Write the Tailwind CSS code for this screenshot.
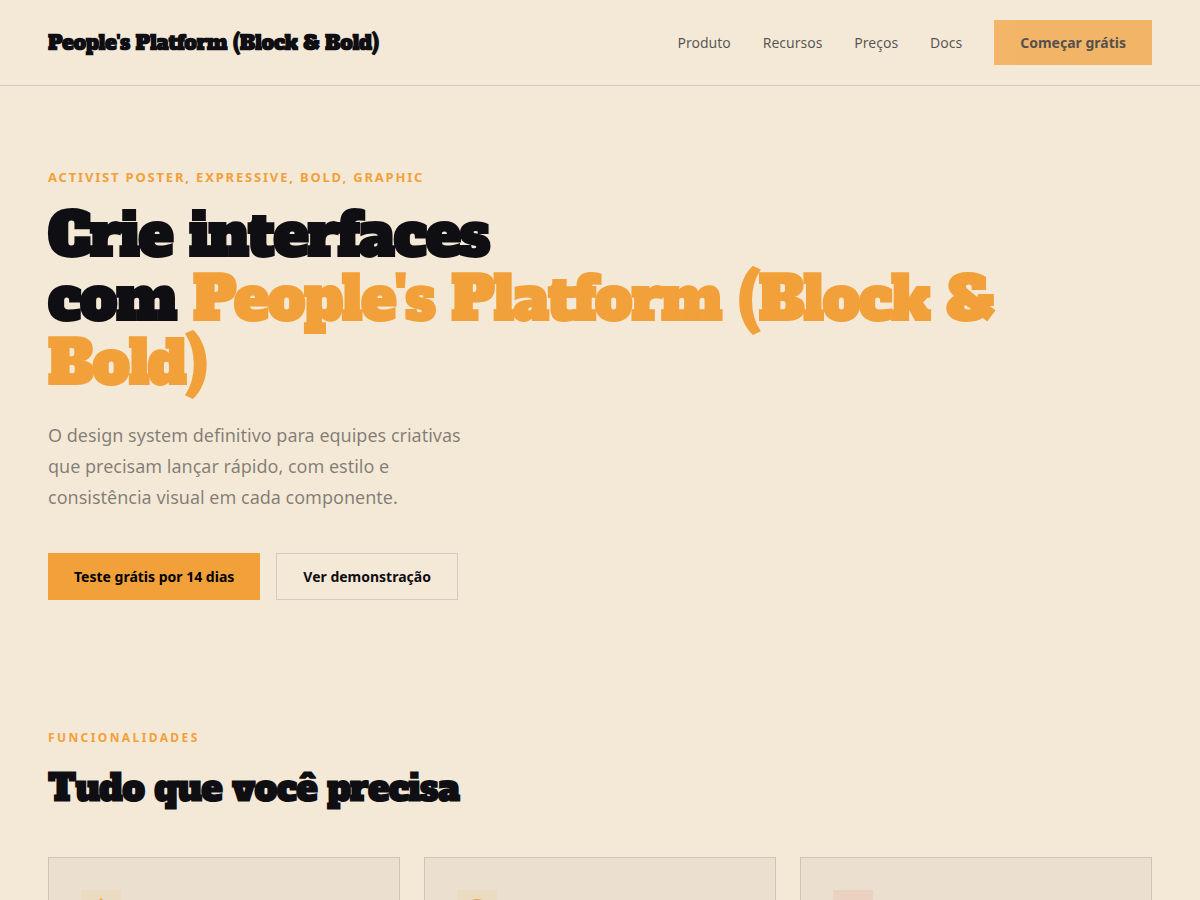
<!DOCTYPE html>
<html lang="pt-BR">
<head>
    <meta charset="UTF-8">
    <meta name="viewport" content="width=device-width, initial-scale=1.0">
    <title>People's Platform (Block &amp; Bold)</title>
    <script src="https://cdn.jsdelivr.net/npm/@tailwindcss/browser@4"></script>
</head>
<body class="bg-[#f4e9d7] text-[#0f0e13] font-['Noto_Sans',sans-serif] overflow-x-hidden">
    <!-- Navbar -->
    <header class="flex items-center justify-between px-12 py-5 border-b border-[#d7ccbb]">
        <a href="#" class="font-['Alfa_Slab_One','DejaVu_Serif',serif] font-bold text-xl tracking-[-0.02em] whitespace-nowrap">People's Platform (Block &amp; Bold)</a>
        <nav class="flex items-center gap-8 text-sm text-[#0f0e13]/70">
            <a href="#produto">Produto</a>
            <a href="#recursos">Recursos</a>
            <a href="#precos">Preços</a>
            <a href="#docs">Docs</a>
            <a href="#comecar" class="bg-[#f2a03a] text-[#0f0e13] font-bold px-[26px] py-3 leading-[21px] opacity-70">Começar grátis</a>
        </nav>
    </header>

    <!-- Hero -->
    <section class="px-12 py-20">
        <p class="text-[13px] leading-[22px] font-bold uppercase tracking-[0.14em] text-[#f2a03a] mb-4">Activist poster, expressive, bold, graphic</p>
        <h1 class="font-['Alfa_Slab_One','DejaVu_Serif',serif] font-bold text-[59px] leading-[64px] tracking-[-0.02em] max-w-[1000px] mb-6">
            Crie interfaces<br>com <span class="text-[#f2a03a]">People's Platform (Block &amp; Bold)</span>
        </h1>
        <p class="text-lg leading-[31px] text-[#0f0e13]/50 max-w-[440px] mb-10">O design system definitivo para equipes criativas que precisam lançar rápido, com estilo e consistência visual em cada componente.</p>
        <div class="flex gap-4 text-sm font-bold">
            <button type="button" class="bg-[#f2a03a] text-black px-[26px] py-3">Teste grátis por 14 dias</button>
            <button type="button" class="border border-[#d7ccbb] px-[26px] py-3 leading-[21px]">Ver demonstração</button>
        </div>
    </section>

    <!-- Features -->
    <section id="recursos" class="px-12 py-12">
        <p class="text-xs leading-5 font-bold uppercase tracking-[0.2em] text-[#f2a03a] mb-4">Funcionalidades</p>
        <h2 class="font-['Alfa_Slab_One','DejaVu_Serif',serif] font-bold text-4xl leading-[49px] tracking-[-0.02em] mb-11">Tudo que você precisa</h2>
        <div class="grid grid-cols-3 gap-6">
            <article class="h-52 bg-[#ebdfcf] border border-[#d0c4b5] p-8">
                <div class="size-10 bg-[#ebdbc0] text-[#f2a03a] flex items-center justify-center">
                    <svg class="size-6" viewBox="0 0 24 24" fill="currentColor"><path d="M12 0l11 12-11 12L1 12z" /></svg>
                </div>
            </article>
            <article class="h-52 bg-[#ebdfcf] border border-[#d0c4b5] p-8">
                <div class="size-10 bg-[#ebdbc0] text-[#f2a03a] flex items-center justify-center">
                    <svg class="size-6" viewBox="0 0 24 24" fill="none" stroke="currentColor" stroke-width="2"><circle cx="12" cy="12" r="10" /></svg>
                </div>
            </article>
            <article class="h-52 bg-[#ebdfcf] border border-[#d0c4b5] p-8">
                <div class="size-10 bg-[#ebd2c0]"></div>
            </article>
        </div>
    </section>
</body>
</html>
